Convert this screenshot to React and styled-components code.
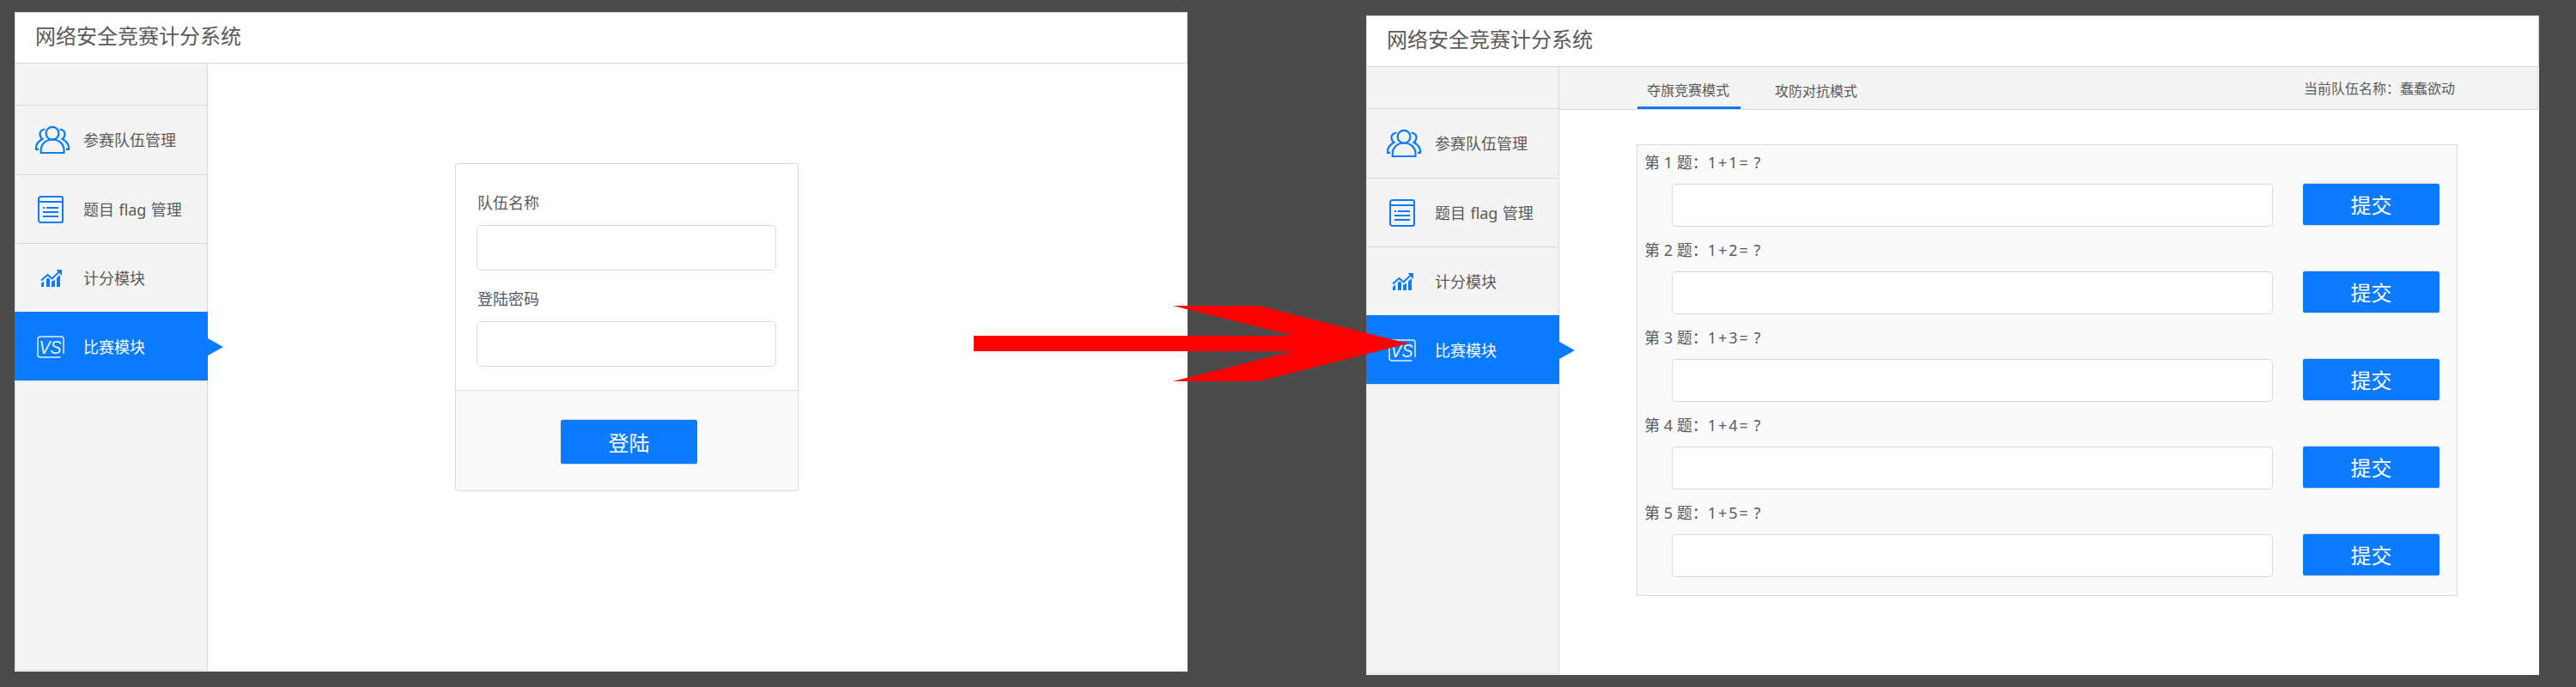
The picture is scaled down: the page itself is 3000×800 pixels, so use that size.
import React from "react";
import styled, { createGlobalStyle } from "styled-components";

const BLUE = "#0a7aff";
const LINE = "#d9d9d9";

const Global = createGlobalStyle`
  * { box-sizing: border-box; }
  body {
    margin: 0;
    background: #4b4b4b;
    color: #5a5a5a;
    font-family: "Noto Sans", "Noto Sans CJK SC", sans-serif;
  }
`;

const Board = styled.main`
  position: relative;
  width: 3000px;
  height: 800px;
  overflow: hidden;
  display: flex;
  align-items: flex-start;
  gap: 208px;
  padding: 14px 0 0 17px;
`;

const Window = styled.section`
  flex: none;
  width: 1366px;
  height: 768px;
  margin-top: ${(p) => p.$drop || 0}px;
  background: #fff;
  display: flex;
  flex-direction: column;
`;

const Header = styled.header`
  flex: none;
  height: 60px;
  border: 1px solid ${LINE};
  padding: 0 0 7px 23px;
  display: flex;
  align-items: center;
  font-size: 24px;
  font-family: "Noto Sans CJK SC", sans-serif;
`;

const Body = styled.div`
  flex: 1;
  display: flex;
  min-height: 0;
`;

const Sidebar = styled.nav`
  flex: none;
  width: 225px;
  height: 707px;
  background: #f4f4f4;
  border: solid ${LINE};
  border-width: 0 1px 1px 1px;
  display: flex;
  flex-direction: column;
`;

const SidebarTop = styled.div`
  flex: none;
  height: 49px;
  border-bottom: 1px solid ${LINE};
`;

const NavItem = styled.a`
  position: relative;
  flex: none;
  height: ${(p) => p.$h || 80}px;
  display: flex;
  align-items: center;
  font-size: 18px;
  line-height: 26px;
  word-spacing: 0.7px;
  border-bottom: ${(p) => (p.$last ? 0 : 1)}px solid ${LINE};
  ${(p) =>
    p.$active &&
    `
    margin: 0 -1px;
    padding: 2px 0 0 1px;
    background: ${BLUE};
    color: #fff;
    border-bottom: 0;
    &::after {
      content: "";
      position: absolute;
      left: 100%;
      top: 31px;
      border: solid transparent;
      border-width: 10.5px 0 10.5px 18px;
      border-left-color: ${BLUE};
    }
  `}
`;

const NavEnd = styled.div`
  border-top: 1px solid ${LINE};
`;

const IconCell = styled.span`
  width: 79px;
  display: flex;
  padding-left: ${(p) => p.$x}px;
  svg { display: block; overflow: visible; }
`;

const Content = styled.div`
  flex: 1;
  display: flex;
  flex-direction: column;
`;

const LoginCard = styled.form`
  width: 400px;
  height: 382px;
  margin: 116px 0 0 288px;
  border: 1px solid ${LINE};
  border-radius: 4px;
  display: flex;
  flex-direction: column;
`;

const Fields = styled.div`
  flex: 1;
  padding: 31px 25px 0 24px;
`;

const Label = styled.label`
  display: block;
  height: 40px;
  padding: 1px 0 0 1px;
  font-size: 18px;
  line-height: 27px;
`;

const Input = styled.input`
  display: block;
  width: ${(p) => p.$w}px;
  height: ${(p) => p.$h}px;
  margin: 0 0 ${(p) => p.$gap || 0}px;
  background: #fff;
  border: 1px solid ${LINE};
  border-radius: 5px;
  outline: 0;
`;

const CardFooter = styled.div`
  height: 118px;
  margin: 0 -1px -1px;
  background: #fafafa;
  border: 1px solid ${LINE};
  border-radius: 4px;
  padding: 33px 0 0 122px;
`;

const Button = styled.button`
  display: block;
  width: 159px;
  height: ${(p) => p.$h}px;
  padding: 0;
  background: ${BLUE};
  border: 1px solid ${LINE};
  border-width: 1px 0;
  border-radius: 3px;
  color: #fff;
  font-family: "Noto Sans CJK SC", sans-serif;
  font-size: 24px;
  line-height: 36px;
`;

const TabBar = styled.div`
  height: 50px;
  margin-right: 1px;
  padding: 0 96px 0 90px;
  background: #f4f4f4;
  border: solid ${LINE};
  border-width: 0 1px 1px 0;
  display: flex;
`;

const Tab = styled.a`
  width: 120px;
  height: 49px;
  padding: ${(p) => (p.$active ? 15 : 16)}px 2px 0 0;
  margin-left: ${(p) => p.$ml || 1}px;
  text-align: center;
  font-size: 16px;
  line-height: 24px;
  border-bottom: 3px solid ${(p) => (p.$active ? BLUE : "transparent")};
`;

const Team = styled.div`
  margin-left: auto;
  padding-top: 13px;
  font-size: 16px;
  line-height: 24px;
`;

const Quiz = styled.ol`
  list-style: none;
  width: 956px;
  height: 526px;
  margin: 40px 0 0 90px;
  padding: 8px 0 0 8px;
  background: #fafafa;
  border: 1px solid ${LINE};
`;

const Question = styled.li`
  height: 102px;
`;

const Prompt = styled.div`
  height: 36px;
  font-size: 18px;
  line-height: 25px;
`;

const Sum = styled.span`
  letter-spacing: 2px;
  word-spacing: -2px;
`;

const AnswerRow = styled.div`
  display: flex;
  gap: 35px;
  padding-left: 32px;
  ${Input} { margin-top: 1px; }
`;

const Arrow = styled.svg`
  position: absolute;
  left: 1133px;
  top: 356px;
`;

const TeamsIcon = () => (
  <svg width="40" height="32" viewBox="0 0 40 32" fill="none" stroke={BLUE} strokeWidth="2.2">
    <circle cx="20" cy="8.3" r="7.4" />
    <path d="M6.7 31v-3C6.7 20.500 12.500 15.500 20 15.500S33.500 20.500 33.500 28v3z" />
    <path d="M11.500 3.500C8 4 5.500 6 5.500 9c0 2.500 1 4.500 3 5.800C4 17.500 1 20.500 1 25v1.800h3" />
    <path d="M28.500 3.500C32 4 34.500 6 34.500 9c0 2.500-1 4.500-3 5.800C36 17.500 39 20.500 39 25v1.800h-3" />
  </svg>
);

const FlagIcon = () => (
  <svg width="30" height="32" viewBox="0 0 30 32" fill="none" stroke={BLUE} strokeWidth="2">
    <path d="M4 1h23a2 2 0 0 1 2 2v26a2 2 0 0 1-2 2H3.500A2.500 2.500 0 0 1 1 28.500V4a3 3 0 0 1 3-3z" />
    <path d="M1 5c0 1.500 1 2 2.500 2H29" />
    <path d="M6 14h2M10 14h14M6 19h18M6 24h18" />
  </svg>
);

const ScoreIcon = () => (
  <svg width="26" height="20" viewBox="0 0 26 20">
    <path d="M1 12.500 8.500 6l5 4.500L22 2.500" fill="none" stroke={BLUE} strokeWidth="2" />
    <path d="M18.500 0H25v7z" fill={BLUE} />
    <path d="M1 16l3-2.500V20H1zM7 11l2-1.500 2 1.500v9H7zM13 13l1 .800 3-2.300V20h-4zM19 9.500 23 6v14h-4z" fill={BLUE} />
  </svg>
);

const VersusIcon = () => (
  <svg width="32" height="26" viewBox="0 0 32 26">
    <path d="M27.500 25H4a3 3 0 0 1-3-3V4a3 3 0 0 1 3-3h24a3 3 0 0 1 3 3v17" fill="none" stroke="#e3f0ff" strokeWidth="1.500" />
    <text x="2.500" y="20.500" textLength="26" lengthAdjust="spacingAndGlyphs" fontFamily="Liberation Sans, sans-serif" fontStyle="italic" fontSize="22" fill="#e3f0ff">VS</text>
  </svg>
);

const Frame = ({ drop, children }) => (
  <Window $drop={drop}>
    <Header>网络安全竞赛计分系统</Header>
    <Body>
      <Sidebar>
        <SidebarTop />
        <NavItem $h={81}><IconCell $x={23}><TeamsIcon /></IconCell>参赛队伍管理</NavItem>
        <NavItem><IconCell $x={26}><FlagIcon /></IconCell>题目 flag 管理</NavItem>
        <NavItem $h={79} $last><IconCell $x={29}><ScoreIcon /></IconCell>计分模块</NavItem>
        <NavItem $active><IconCell $x={25}><VersusIcon /></IconCell>比赛模块</NavItem>
        <NavEnd />
      </Sidebar>
      <Content>{children}</Content>
    </Body>
  </Window>
);

export default function App() {
  return (
    <>
      <Global />
      <Board>
        <Frame>
          <LoginCard>
            <Fields>
              <Label>队伍名称</Label>
              <Input $w={349} $h={53} $gap={19} />
              <Label>登陆密码</Label>
              <Input $w={349} $h={53} />
            </Fields>
            <CardFooter>
              <Button type="button" $h={53}>登陆</Button>
            </CardFooter>
          </LoginCard>
        </Frame>
        <Frame drop={4}>
          <TabBar>
            <Tab $active>夺旗竞赛模式</Tab>
            <Tab $ml={29}>攻防对抗模式</Tab>
            <Team>当前队伍名称：蠢蠢欲动</Team>
          </TabBar>
          <Quiz>
            {[1, 2, 3, 4, 5].map((n) => (
              <Question key={n}>
                <Prompt>第 {n} 题：<Sum>1+{n}= ?</Sum></Prompt>
                <AnswerRow>
                  <Input $w={700} $h={50} />
                  <Button type="button" $h={50}>提交</Button>
                </AnswerRow>
              </Question>
            ))}
          </Quiz>
        </Frame>
        <Arrow width="507" height="88" viewBox="0 0 507 88">
          <path d="M1 35H373L233 0H333L507 44L333 88H233L373 53H1z" fill="#f00" />
        </Arrow>
      </Board>
    </>
  );
}
